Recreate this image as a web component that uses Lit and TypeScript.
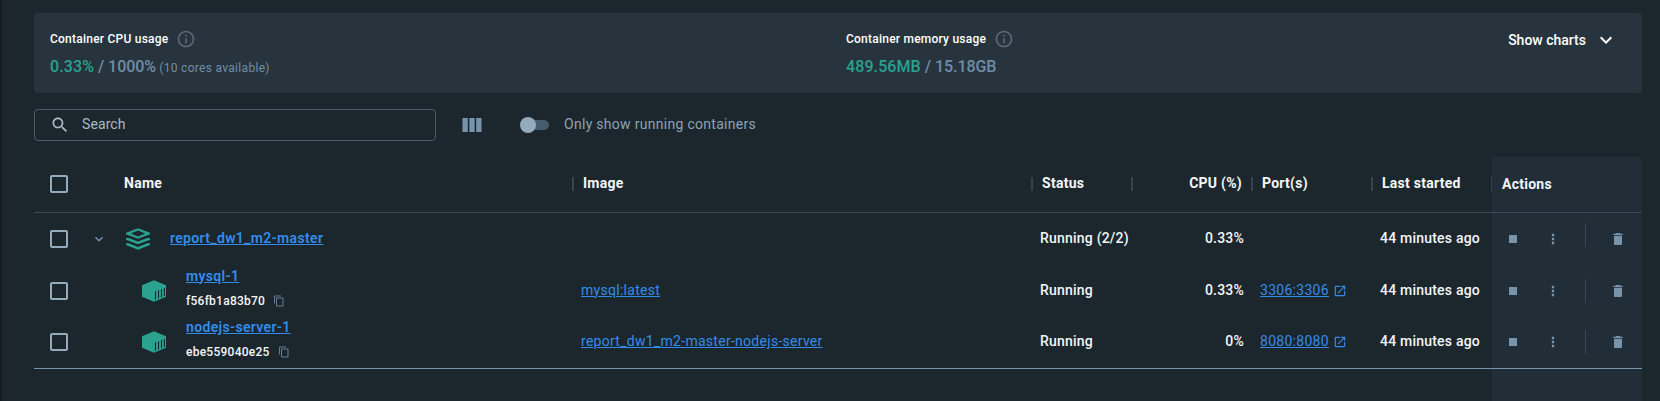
import { LitElement, html, css, svg, nothing } from "lit";
import { customElement, property } from "lit/decorators.js";

interface Row {
  kind: "group" | "item";
  name: string;
  id?: string;
  image?: string;
  status: string;
  cpu: string;
  port?: string;
  started: string;
}

const rows: Row[] = [
  { kind: "group", name: "report_dw1_m2-master", status: "Running (2/2)", cpu: "0.33%", started: "44 minutes ago" },
  { kind: "item", name: "mysql-1", id: "f56fb1a83b70", image: "mysql:latest", status: "Running", cpu: "0.33%", port: "3306:3306", started: "44 minutes ago" },
  { kind: "item", name: "nodejs-server-1", id: "ebe559040e25", image: "report_dw1_m2-master-nodejs-server", status: "Running", cpu: "0%", port: "8080:8080", started: "44 minutes ago" },
];

const shapes = {
  info: svg`<path d="M11 7h2v2h-2zm0 4h2v6h-2zm1-9C6.480 2 2 6.480 2 12s4.480 10 10 10 10-4.480 10-10S17.520 2 12 2m0 18c-4.410 0-8-3.590-8-8s3.590-8 8-8 8 3.590 8 8-3.590 8-8 8"/>`,
  search: svg`<path d="M15.500 14h-.790l-.280-.270C15.410 12.590 16 11.110 16 9.500 16 5.910 13.090 3 9.500 3S3 5.910 3 9.500 5.910 16 9.500 16c1.610 0 3.090-.590 4.230-1.570l.270.280v.790l5 4.990L20.490 19zm-6 0C7.010 14 5 11.990 5 9.500S7.010 5 9.500 5 14 7.010 14 9.500 11.990 14 9.500 14"/>`,
  columns: svg`<path d="M2.500 5h5.300v14H2.500zM9.350 5h5.300v14h-5.300zM16.200 5h5.300v14h-5.300z"/>`,
  chevron: svg`<path d="M7.410 8.590 12 13.170l4.590-4.580L18 10l-6 6-6-6z"/>`,
  open: svg`<path d="M19 19H5V5h7V3H5c-1.110 0-2 .9-2 2v14c0 1.100.890 2 2 2h14c1.100 0 2-.9 2-2v-7h-2zM14 3v2h3.590l-9.830 9.830 1.410 1.410L19 6.410V10h2V3z"/>`,
  copy: svg`<path d="M16 1H4c-1.100 0-2 .9-2 2v14h2V3h12zm3 4H8c-1.100 0-2 .9-2 2v14c0 1.100.9 2 2 2h11c1.100 0 2-.9 2-2V7c0-1.100-.9-2-2-2m0 16H8V7h11z"/>`,
  stop: svg`<path d="M6 6h12v12H6z"/>`,
  more: svg`<path d="M10.300 4.300h3.400v3.400h-3.400zM10.300 10.300h3.400v3.400h-3.400zM10.300 16.300h3.400v3.400h-3.400z"/>`,
  trash: svg`<path d="M6 19c0 1.100.9 2 2 2h8c1.100 0 2-.9 2-2V7H6zM19 4h-3.500l-1-1h-5l-1 1H5v2h14z"/>`,
  stack: svg`<path fill-rule="evenodd" d="M12 1.200 24 5.700v1.500L12 11.700 0 7.200V5.700zM12 3.500 4.800 6.450 12 9.400l7.200-2.950z"/><path d="M0 10.900h2.700L12 14.500l9.300-3.600H24v1.800L12 17.200 0 12.700zM0 16.300h2.700L12 19.900l9.300-3.600H24v1.800l-12 4.600L0 18.100z"/>`,
  cube: svg`<path d="M12 1.200 24 6.200v11.600l-12 5L0 17.800V6.200z"/><path d="M13.500 12.300v8.400M16.500 11.200v8.400M19.500 10.100v8.200M22.400 9v8.100" fill="none" stroke="#1c272d" stroke-width="1.100"/>`,
};

const icon = (name: keyof typeof shapes, cls: string) =>
  html`<svg class=${cls} viewBox="0 0 24 24" fill="currentColor" aria-hidden="true">${shapes[name]}</svg>`;

@customElement("usage-stat")
class UsageStat extends LitElement {
  @property() label = "";
  @property() used = "";
  @property() total = "";
  @property() note = "";

  static styles = css`
    :host { display: block; }
    .label { display: flex; align-items: center; gap: 8px; height: 20px; font-size: 12px; font-weight: 500; color: #fff; letter-spacing: 0.23px; }
    .info { width: 20px; height: 20px; color: #596a75; }
    .value { margin-top: 6px; font-size: 16px; line-height: 24px; color: #6f8ea9; letter-spacing: 0.1px; white-space: pre; }
    .used { color: #2aa28f; font-weight: 500; }
    .total { font-weight: 500; letter-spacing: -0.04px; }
    .note { font-size: 12px; letter-spacing: 0.3px; }
  `;

  render() {
    return html`
      <div class="label"><span>${this.label}</span>${icon("info", "info")}</div>
      <div class="value"><span class="used">${this.used}</span><span class="total"> / ${this.total}</span>${this.note ? html`<span class="note"> ${this.note}</span>` : nothing}</div>
    `;
  }
}

@customElement("container-row")
class ContainerRow extends LitElement {
  @property({ attribute: false }) row!: Row;

  static styles = css`
    :host { display: grid; grid-template-columns: var(--columns); height: 52px; font-size: 14px; font-weight: 500; letter-spacing: 0.21px; color: #f3f5f7; }
    .cell { display: flex; align-items: center; padding: 0 8px; min-width: 0; white-space: nowrap; }
    .select { padding: 0 0 0 16px; justify-content: space-between; }
    .box { width: 18px; height: 18px; box-sizing: border-box; border: 2px solid #94abbc; border-radius: 2px; }
    .toggle { width: 16px; height: 16px; color: #7794ab; margin-right: 9px; }
    .name { padding-left: 10px; }
    .child { padding-left: 26px; }
    .kind { width: 24px; height: 24px; color: #2aa28f; margin-right: 20px; flex: none; }
    a { color: #338ceb; text-decoration: underline; }
    .text { position: relative; top: -1px; }
    .title { line-height: 20px; font-weight: 600; letter-spacing: 0.34px; }
    .child .title { margin-top: -2px; padding-bottom: 4px; }
    .idline { display: flex; align-items: center; font-size: 12px; line-height: 20px; height: 22px; gap: 8px; letter-spacing: 0.25px; }
    .copy { width: 12px; height: 12px; color: #647d92; }
    .image, .port { font-weight: 400; letter-spacing: 0.28px; }
    .cpu { justify-content: flex-end; }
    .open { width: 14px; height: 14px; color: #338ceb; margin-left: 4px; }
    .actions { padding: 0; }
    .stop { width: 16px; height: 16px; margin-left: 13px; color: #7794ab; }
    .more { width: 16px; height: 16px; margin-left: 24px; color: #7794ab; }
    .rule { width: 1px; height: 24px; margin-left: 24px; background: #394a56; }
    .raised { align-self: flex-start; margin-top: 10px; }
    .trash { width: 16px; height: 16px; margin-left: 24px; color: #7794ab; }
  `;

  render() {
    const r = this.row;
    const group = r.kind === "group";
    return html`
      <div class="cell select"><span class="box"></span>${group ? icon("chevron", "toggle") : nothing}</div>
      <div class="cell name ${group ? "" : "child"}">
        ${icon(group ? "stack" : "cube", "kind")}
        <div class="text"><div class="title"><a>${r.name}</a></div>${r.id ? html`<div class="idline"><span>${r.id}</span>${icon("copy", "copy")}</div>` : nothing}</div>
      </div>
      <div class="cell image">${r.image ? html`<a class="text">${r.image}</a>` : nothing}</div>
      <div class="cell"><span class="text">${r.status}</span></div>
      <div class="cell cpu"><span class="text">${r.cpu}</span></div>
      <div class="cell port">${r.port ? html`<a class="text">${r.port}</a>${icon("open", "open")}` : nothing}</div>
      <div class="cell"><span class="text">${r.started}</span></div>
      <div class="cell actions">${icon("stop", "stop")}${icon("more", "more")}<span class="rule ${group ? "raised" : ""}"></span>${icon("trash", "trash")}</div>
    `;
  }
}

@customElement("app-root")
class AppRoot extends LitElement {
  static styles = css`
    :host {
      --columns: 82px 457px 459px 100px 120px 120px 120px 150px;
      display: flex; flex-direction: column; box-sizing: border-box; height: 401px; overflow: hidden;
      padding: 13px 18px 0 32px; border-left: 2px solid #161d22; background: #1c272d;
      font-family: Roboto, sans-serif; color: #f3f5f7;
    }
    .summary { display: grid; grid-template-columns: 796px 1fr auto; height: 80px; box-sizing: border-box; padding: 16px; background: #27343d; border-radius: 4px; }
    .charts { display: flex; align-items: center; height: 22px; gap: 8px; margin-right: 8px; font-size: 14px; font-weight: 500; color: #fff; }
    .down { width: 24px; height: 24px; }
    .toolbar { display: flex; align-items: center; height: 32px; margin-top: 16px; flex: none; }
    .search { display: flex; align-items: center; box-sizing: border-box; width: 402px; height: 32px; border: 1px solid #465c6e; border-radius: 4px; padding-left: 15px; gap: 12px; font-size: 14px; letter-spacing: 0.1px; color: #a9b9c6; }
    .search span, .only { padding-bottom: 2px; }
    .glass { width: 20px; height: 20px; }
    .cols { width: 24px; height: 24px; margin-left: 23.500px; color: #7794ab; }
    .switch { display: flex; align-items: center; width: 27px; height: 10px; margin-left: 38.500px; border-radius: 5px; background: #465c6e; }
    .knob { width: 16px; height: 16px; flex: none; border-radius: 50%; background: #94abbc; margin-left: -2px; }
    .only { margin-left: 15px; font-size: 14px; color: #8ba3b6; letter-spacing: 0.29px; }
    .table { flex: 1; margin-top: 16px; background: linear-gradient(to right, transparent 1458px, #222e37 1458px); border-top-right-radius: 4px; }
    .head { display: grid; grid-template-columns: 82px 456px 459px 100px 120px 120px 120px 1px 150px; height: 55px; border-bottom: 1px solid #394a56; font-size: 14px; font-weight: 700; letter-spacing: 0.26px; }
    .th { display: flex; align-items: center; box-sizing: border-box; padding: 0 9px 4px 11px; white-space: nowrap; }
    .th.ruled { background: linear-gradient(#34444f, #34444f) 0 20px / 2px 14px no-repeat; }
    .th.edge { padding: 0; }
    .th.first { padding-left: 8px; }
    .th.right { justify-content: flex-end; }
    .th.last { padding: 0 0 2px 10px; }
    .th.check { padding: 0 0 2px 16px; }
    .box { width: 18px; height: 18px; box-sizing: border-box; border: 2px solid #94abbc; border-radius: 2px; }
    .body { height: 155px; border-bottom: 1px solid #7794ab; }
    container-row:nth-child(2) { height: 51px; }
  `;

  render() {
    return html`
      <section class="summary">
        <usage-stat label="Container CPU usage" used="0.33%" total="1000%" note="(10 cores available)"></usage-stat>
        <usage-stat label="Container memory usage" used="489.56MB" total="15.18GB"></usage-stat>
        <div class="charts"><span>Show charts</span>${icon("chevron", "down")}</div>
      </section>
      <div class="toolbar">
        <div class="search">${icon("search", "glass")}<span>Search</span></div>
        ${icon("columns", "cols")}
        <span class="switch"><span class="knob"></span></span>
        <span class="only">Only show running containers</span>
      </div>
      <section class="table">
        <div class="head">
          <div class="th check"><span class="box"></span></div>
          <div class="th first">Name</div>
          <div class="th ruled">Image</div>
          <div class="th ruled">Status</div>
          <div class="th ruled right">CPU (%)</div>
          <div class="th ruled">Port(s)</div>
          <div class="th ruled">Last started</div>
          <div class="th ruled edge"></div>
          <div class="th last">Actions</div>
        </div>
        <div class="body">${rows.map((r) => html`<container-row .row=${r}></container-row>`)}</div>
      </section>
    `;
  }
}
